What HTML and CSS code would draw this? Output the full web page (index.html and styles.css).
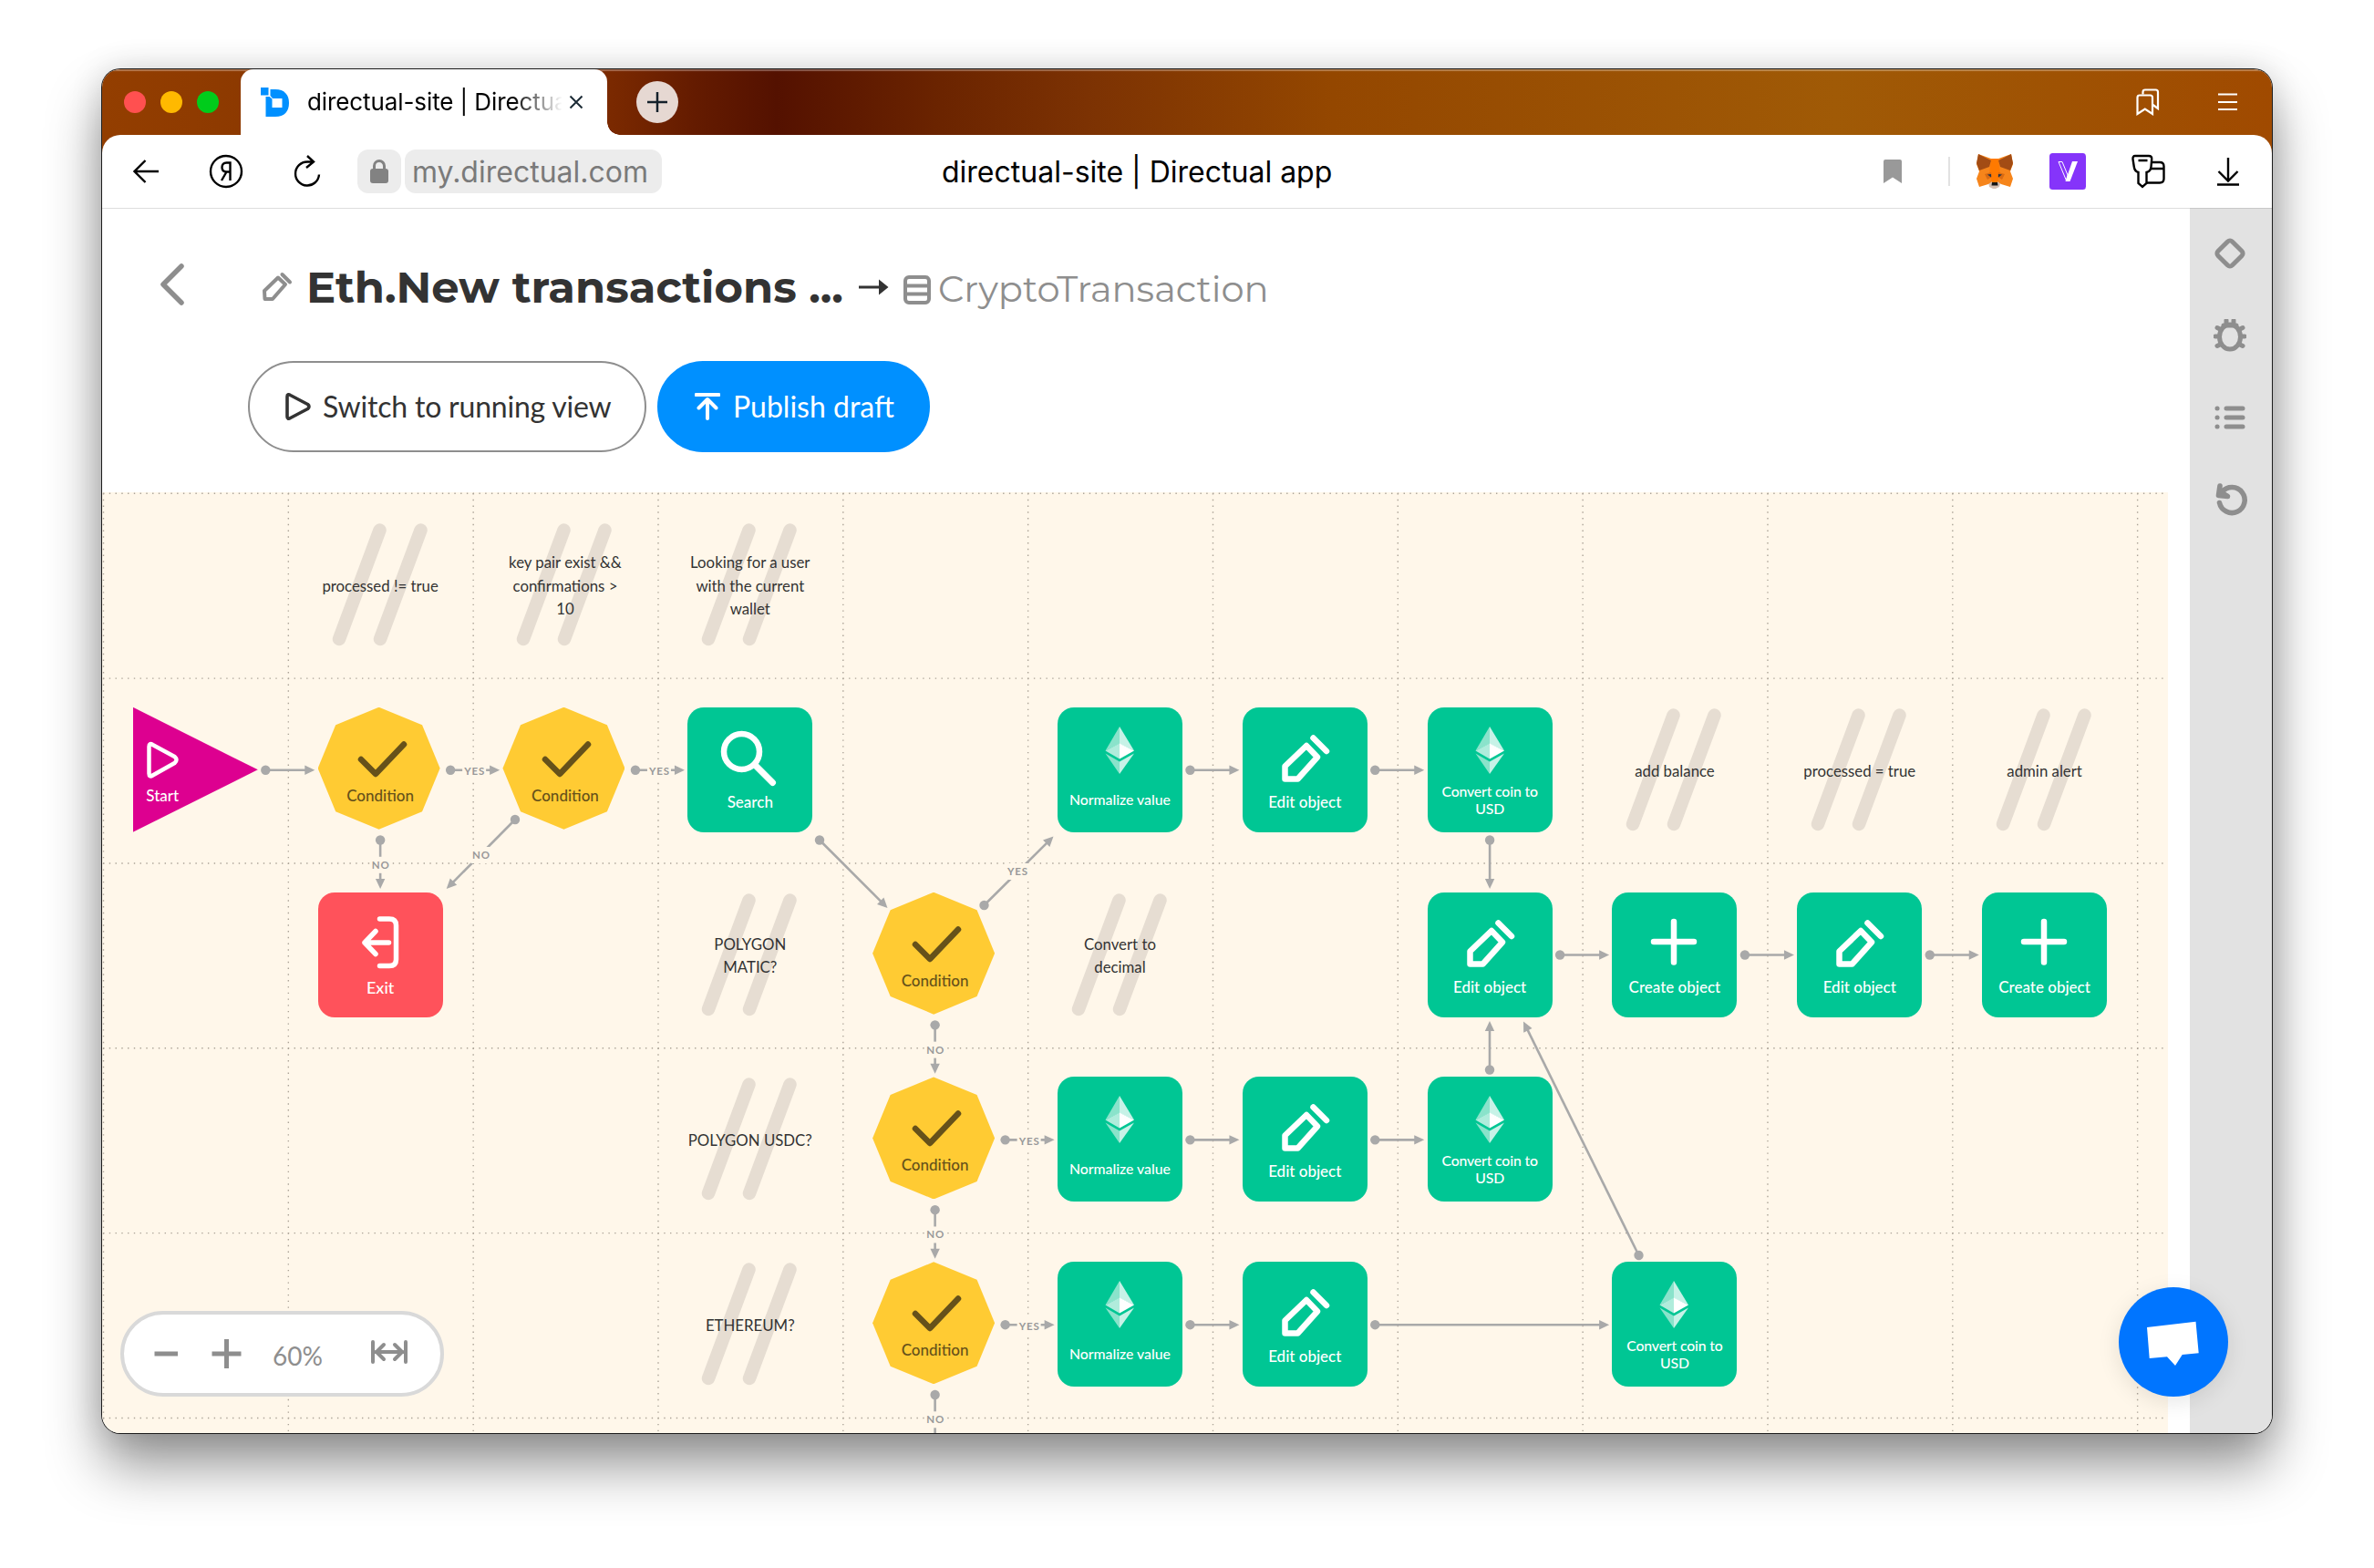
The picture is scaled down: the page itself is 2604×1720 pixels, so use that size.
FILE: index.html
```html
<!doctype html>
<html lang="en">

<head>
  <meta charset="UTF-8" />
  <meta name="viewport" content="width=device-width, initial-scale=1.0" />
  <title>directual-site | Directual app</title>
  <link rel="stylesheet" href="styles.css">
</head>

<body>
  <div class="window">
    <div class="tab-bar">
      <div class="lights">
        <span class="light red"></span>
        <span class="light yellow"></span>
        <span class="light green"></span>
      </div>
      <div class="tab">
        <svg class="favicon" width="32" height="32" viewBox="0 0 32 32">
          <path fill="#0090ff" d="M5.500 13V32H16C26 32 31 26 31 17C31 8 26 2 16 2H10.500V9L13 12H23.500V22H12.500V12.500L9.500 10H5.500Z" />
          <rect fill="#0090ff" x="0" y="0" width="8.500" height="8.500" />
        </svg>
        <span class="tab-title">directual-site | Directual app</span>
        <svg class="tab-close" width="16" height="16" viewBox="0 0 16 16">
          <path d="M1.500 1.500L14.500 14.500M14.500 1.500L1.500 14.500" />
        </svg>
      </div>
      <div class="new-tab">
        <svg width="46" height="46" viewBox="0 0 46 46">
          <path d="M12 23H34M23 12V34" />
        </svg>
      </div>
      <div class="bar-icons">
        <svg width="26" height="30" viewBox="0 0 26 30">
          <path d="M7.500 6.500V4Q7.500 1.500 10 1.500H21.500Q24 1.500 24 4V22L18.500 18" />
          <path d="M1.500 28V10Q1.500 7.500 4 7.500H15.500Q18 7.500 18 10V28L9.800 22.500Z" />
        </svg>
        <svg width="21" height="20" viewBox="0 0 21 20">
          <path d="M0 1.500H21M0 10H21M0 18H21" />
        </svg>
      </div>
    </div>

    <div class="toolbar">
      <div class="nav">
        <svg width="28" height="28" viewBox="0 0 28 28">
          <path d="M13.500 2L1.500 14L13.500 26M1.500 14H28" />
        </svg>
        <svg width="38" height="38" viewBox="0 0 38 38">
          <circle cx="19" cy="19" r="17" />
          <path d="M23.500 29V9.500H19.500Q14.500 9.500 14.500 14.500Q14.500 19.500 19.500 19.500H23.500M19.500 19.500L14 29" />
        </svg>
        <svg width="34" height="36" viewBox="0 0 34 36">
          <path d="M23 7.500H17A13 13 0 1 0 30 21.500M17 1L24 7.500L16 14" />
        </svg>
      </div>
      <div class="lock">
        <svg width="20" height="26" viewBox="0 0 20 26">
          <path d="M4.500 11V7A5.500 5.500 0 0 1 15.500 7V11" />
          <rect x="0" y="10" width="20" height="16" rx="3" />
        </svg>
      </div>
      <div class="url">my.directual.com</div>
      <div class="page-name">directual-site | Directual app</div>
      <div class="extensions">
        <svg class="bookmark" width="20" height="26" viewBox="0 0 20 26">
          <path fill="#999" d="M0 2Q0 0 2 0H18Q20 0 20 2V26L10 19.500L0 26Z" />
        </svg>
        <span class="divider"></span>
        <svg class="fox" width="40" height="38" viewBox="0 0 40 38">
          <path fill="#d5bfb2" d="M13 30H27L25 36L21 38H18L14 36Z" />
          <path fill="#f6851b" d="M2 0L16 5H24L38 0L40 11L37 19L40 27L37 36L27 33L23 30H17L13 33L3 36L0 27L3 19L0 11Z" />
          <path fill="#ff7a00" d="M16 5H24L26 21L23 31H17L14 21Z" />
          <path fill="#a34c14" d="M2 0L16 7L14 14L3 18L0 10ZM38 0L24 7L26 14L37 18L40 10Z" />
          <path fill="#d96a12" d="M9 22L16 20L17 25L12 28ZM31 22L24 20L23 25L28 28Z" />
          <path fill="#233447" d="M12 22.500L16 22L16 25.500ZM28 22.500L24 22L24 25.500Z" />
          <path fill="#161616" d="M17 31H23L23.500 34.500H16.500Z" />
        </svg>
        <svg class="vee" width="40" height="40" viewBox="0 0 40 40">
          <rect width="40" height="40" rx="3.500" fill="#8534fa" />
          <path fill="none" stroke="#fff" stroke-width="1" d="M10 9.500H14L20 24L18.500 30Z" />
          <path fill="#fff" d="M25 9H31L22.500 31H17.500Z" />
        </svg>
        <svg class="keys" width="37" height="38" viewBox="0 0 37 38">
          <path d="M21 9H31Q35.500 9 35.500 13.500V27Q35.500 31.500 31 31.500H16.500M21.500 16H35" />
          <path d="M4 2H19Q22.500 2 22.200 5.500L21.500 14Q21 19 16.500 20V32L12 36L7.500 32V20Q3.500 19 2.800 14L1.500 5.500Q1.200 2 4 2ZM7.500 7H17.500" />
        </svg>
        <svg class="download" width="24" height="31" viewBox="0 0 24 31">
          <path d="M12 0V25M1.500 15L12 25.500L22.500 15M0 29.500H24" />
        </svg>
      </div>
    </div>

    <div class="page">
      <div class="main">
        <div class="header">
          <svg class="back" width="28" height="48" viewBox="0 0 28 48">
            <path d="M24 4L4 24L24 44" />
          </svg>
          <div class="title">
            <svg class="edit" width="34" height="34" viewBox="0 0 34 34">
              <path d="M3 21L18 6.500L26 14L12 30H3.500Z" />
              <path d="M22.500 3L31 11.500" />
            </svg>
            <h1>Eth.New transactions ...</h1>
            <svg class="to" width="33" height="20" viewBox="0 0 33 20">
              <path fill="#333" d="M0 8.500H22V1.500L32.500 10L22 18.500V11.500H0Z" />
            </svg>
            <svg class="table" width="30" height="32" viewBox="0 0 30 32">
              <rect x="2" y="2" width="26" height="28" rx="4" />
              <path d="M2 11.500H28M2 20.500H28" />
            </svg>
            <span class="struct">CryptoTransaction</span>
          </div>
        </div>
        <div class="actions">
          <button class="btn">
            <svg width="28" height="30" viewBox="0 0 28 30">
              <path d="M2 4Q2 0.500 5.500 2.500L24.500 12.500Q27.500 15 24.500 17.500L5.500 27.500Q2 29.500 2 26Z" />
            </svg>
            <span class="btn-text">Switch to running view</span>
          </button>
          <button class="btn primary">
            <svg width="28" height="30" viewBox="0 0 28 30">
              <path d="M1.500 2H26.500M14 28V8M4.500 16.500L14 7L23.500 16.500" />
            </svg>
            <span class="btn-text">Publish draft</span>
          </button>
        </div>

        <div class="canvas" id="canvas">
          <svg class="links" id="links" width="2266" height="1032" viewBox="112 540 2266 1032"></svg>
        </div>
      </div>

      <div class="sidebar">
        <svg width="36" height="36" viewBox="0 0 36 36">
          <rect x="7" y="7" width="22" height="22" rx="3.500" transform="rotate(45 18 18)" />
        </svg>
        <svg width="36" height="36" viewBox="0 0 36 36">
          <ellipse cx="18" cy="19.500" rx="11.500" ry="13.500" />
          <path d="M14 6V1.500M22 6V1.500M11 7H25M7 11L4 9.500M29 11L32 9.500M6 19H2M30 19H34M7 28L4 29.500M29 28L32 29.500" />
        </svg>
        <svg width="36" height="36" viewBox="0 0 36 36">
          <path d="M4 8H4.100M4 18H4.100M4 28H4.100M14 8H32M14 18H32M14 28H32" />
        </svg>
        <svg class="undo" width="36" height="36" viewBox="0 0 36 36">
          <path d="M6.500 21.500A14 14 0 1 0 9.500 9.500M7 3L5.500 13.500L15.500 14.500L8 10" />
        </svg>
      </div>

      <div class="zoom">
        <svg width="96" height="32" viewBox="0 0 96 32">
          <path d="M0.500 16H26M63.500 16H95.500M79.500 0V32" />
        </svg>
        <span class="percent">60%</span>
        <svg class="fit" width="40" height="26" viewBox="0 0 40 26">
          <path d="M2 2V24M38 2V24M5 13H35M14 5L6 13L14 21M26 5L34 13L26 21" />
        </svg>
      </div>
      <div class="chat">
        <svg width="120" height="120" viewBox="0 0 120 120">
          <path fill="#fff" d="M31 44L84.500 37.700L87.700 72.300L69.700 74L62 86L53 76.300L33.700 78Z" />
        </svg>
      </div>
    </div>
  </div>

  <script>
    const CELL = 202.83;
    const ORIGIN_X = 145.8;
    const ORIGIN_Y = 775.8;

    const icons = {
      start: '<path d="M17.500 43Q17.500 38.500 21.500 41L45.500 54Q49.500 57.500 45.500 61L21.500 74.500Q17.500 77 17.500 72.500Z" stroke-width="4.500"/>',
      condition: '<path d="M47 57L63 73L94 40.500" stroke-width="6.500"/>',
      search: '<circle cx="59.500" cy="48.500" r="19.500" stroke-width="6.500"/><path d="M74.500 63.500L93.500 82.500" stroke-width="7"/>',
      exit: '<path d="M67.500 29H78Q85.500 29 85.500 36V73.500Q85.500 80.500 78 80.500H67.500M77.500 55H51M63 42.500L51 55L63 67.500" stroke-width="5.500"/>',
      edit: '<path d="M46.500 64.500L70 42L82 54.500L60.500 78.500H46.500Z" stroke-width="6.500"/><path d="M77.500 33.500L92 48" stroke-width="6.500"/>',
      create: '<path d="M68 32V76.500M46 54H90" stroke-width="6.500"/>',
      eth: '<g stroke="none"><path fill="#8ae3cb" d="M68 21V40L52.500 47.500Z"/><path fill="#c7f2e7" d="M68 21V40L84 47.500Z"/><path fill="#b0ecdc" d="M68 39.500V56.500L52.500 47.500Z"/><path fill="#fff" d="M68 39.500V56.500L84 47.500Z"/><path fill="#8ae3cb" d="M68 59.500V73L52.500 50.500Z"/><path fill="#c7f2e7" d="M68 59.500V73L84 50.500Z"/></g>',
      comment: '<path d="M67.500 8.500L23 128M112.500 8.500L68 128" stroke-width="14.500"/>'
    };

    // [column, row, type, label, icon]
    const nodes = [
      [1, -1, "comment", "processed != true"],
      [2, -1, "comment", "key pair exist &amp;&amp;<br>confirmations &gt;<br>10"],
      [3, -1, "comment", "Looking for a user<br>with the current<br>wallet"],
      [0, 0, "start", "Start"],
      [1, 0, "condition", "Condition"],
      [2, 0, "condition", "Condition"],
      [3, 0, "action", "Search", "search"],
      [5, 0, "plugin", "Normalize value", "eth"],
      [6, 0, "action", "Edit object", "edit"],
      [7, 0, "plugin two", "Convert coin to<br>USD", "eth"],
      [8, 0, "comment", "add balance"],
      [9, 0, "comment", "processed = true"],
      [10, 0, "comment", "admin alert"],
      [1, 1, "exit", "Exit"],
      [3, 1, "comment", "POLYGON<br>MATIC?"],
      [4, 1, "condition", "Condition"],
      [5, 1, "comment", "Convert to<br>decimal"],
      [7, 1, "action", "Edit object", "edit"],
      [8, 1, "action", "Create object", "create"],
      [9, 1, "action", "Edit object", "edit"],
      [10, 1, "action", "Create object", "create"],
      [3, 2, "comment", "POLYGON USDC?"],
      [4, 2, "condition", "Condition"],
      [5, 2, "plugin", "Normalize value", "eth"],
      [6, 2, "action", "Edit object", "edit"],
      [7, 2, "plugin two", "Convert coin to<br>USD", "eth"],
      [3, 3, "comment", "ETHEREUM?"],
      [4, 3, "condition", "Condition"],
      [5, 3, "plugin", "Normalize value", "eth"],
      [6, 3, "action", "Edit object", "edit"],
      [8, 3, "plugin two", "Convert coin to<br>USD", "eth"]
    ];

    const canvas = document.getElementById("canvas");
    nodes.forEach(([col, row, type, label, icon]) => {
      const node = document.createElement("div");
      node.className = `node ${type}`;
      node.style.left = `${ORIGIN_X + col * CELL - 112}px`;
      node.style.top = `${ORIGIN_Y + row * CELL - 540}px`;
      node.innerHTML = `<svg class="icon" viewBox="0 0 137 137">${icons[icon || type]}</svg><span class="label">${label}</span>`;
      canvas.appendChild(node);
    });

    let out = "";

    // dotted grid
    for (let i = 0; i < 12; i++) {
      const x = 113.5 + i * CELL;
      out += `<path class="grid" d="M${x} 541V1572"/>`;
    }
    for (let i = 0; i < 6; i++) {
      const y = 541.3 + i * CELL;
      out += `<path class="grid" d="M113 ${y}H2376"/>`;
    }

    function link(x1, y1, x2, y2, text, tx, ty) {
      const angle = Math.atan2(y2 - y1, x2 - x1) * 180 / Math.PI;
      const len = Math.hypot(x2 - x1, y2 - y1);
      out += `<g transform="translate(${x1} ${y1}) rotate(${angle})">
        <path class="line" d="M0 0H${len - 8}"/><circle class="end" r="5.200"/>
        <path class="end" d="M${len} 0L${len - 11} -5.200V5.200Z"/></g>`;
      if (text) {
        const w = text === "YES" ? 26 : 22;
        out += `<rect class="mask" x="${tx - w / 2}" y="${ty - 9}" width="${w}" height="18"/>
          <text class="tag" x="${tx + 0.5}" y="${ty + 4}">${text}</text>`;
      }
    }

    function right(col, row, text, span = 1) {
      const x = ORIGIN_X + col * CELL + 145.5;
      const y = ORIGIN_Y + row * CELL + 68.9;
      link(x, y, x + 54 + (span - 1) * CELL, y, text, x + 26, y + 1.5);
    }

    function down(col, row, text) {
      const x = ORIGIN_X + col * CELL + 68.5;
      const y = ORIGIN_Y + row * CELL + 145.7;
      link(x, y, x, y + 53.5, text, x, y + 27.3);
    }

    right(0, 0);
    right(1, 0, "YES");
    right(2, 0, "YES");
    right(5, 0);
    right(6, 0);
    right(7, 1);
    right(8, 1);
    right(9, 1);
    right(4, 2, "YES");
    right(5, 2);
    right(6, 2);
    right(4, 3, "YES");
    right(5, 3);
    right(6, 3, "", 2);
    down(1, 0, "NO");
    down(4, 1, "NO");
    down(4, 2, "NO");
    down(4, 3, "NO");
    down(7, 0);
    link(1634, 1173.5, 1634, 1120);
    link(565, 899, 489.7, 975, "NO", 527.5, 938);
    link(899, 921.5, 973.5, 996);
    link(1079.5, 993, 1155.5, 917.5, "YES", 1116, 956);
    link(1797.5, 1377, 1671, 1120.5);
    document.getElementById("links").innerHTML = out;
  </script>
</body>

</html>
```
FILE: styles.css
```css
* {
  box-sizing: border-box;
}

body {
  margin: 0;
  padding: 76px 112px 148px;
  height: 1720px;
  background: #fff;
  font-family: Lato, "Liberation Sans", sans-serif;
  color: #333;
  overflow: hidden;
}

svg {
  display: block;
  flex: none;
}

.window {
  width: 2380px;
  height: 1496px;
  display: flex;
  flex-direction: column;
  border-radius: 20px;
  overflow: hidden;
  background: #fff;
  box-shadow: 0 0 0 1px #1b1b1b, 0 36px 60px rgba(0, 0, 0, 0.42), 0 0 36px rgba(0, 0, 0, 0.14);
}

/* browser chrome */

.tab-bar {
  height: 92px;
  margin-bottom: -20px;
  padding-bottom: 20px;
  flex: none;
  display: flex;
  align-items: center;
  background: linear-gradient(90deg, #933e00 0, #873500 300px, #7a2900 560px, #641b00 650px, #541100 740px, #6b2400 920px, #7c3203 1080px, #944700 1350px, #a05a06 1900px, #9f5203 2150px, #a04a00 2380px);
  box-shadow: inset 0 2px 1px rgba(255, 255, 255, 0.3);
}

.lights {
  width: 152px;
  padding-left: 24px;
  display: flex;
  gap: 16px;
}

.light {
  width: 24px;
  height: 24px;
  border-radius: 50%;
}

.red {
  background: #ff5050;
}

.yellow {
  background: #ffb900;
}

.green {
  background: #00cc1b;
}

.tab {
  position: relative;
  width: 402px;
  height: 72px;
  padding: 0 26px 0 22px;
  display: flex;
  align-items: center;
  background: #fff;
  border-radius: 14px 14px 0 0;
}

/* concave corner where the tab meets the toolbar */
.tab::after {
  content: "";
  position: absolute;
  left: 100%;
  bottom: 0;
  width: 14px;
  height: 14px;
  background: radial-gradient(circle at 100% 0, transparent 13.5px, #fff 14px);
}

.favicon {
  margin-right: 19px;
}

.tab-title {
  width: 280px;
  overflow: hidden;
  white-space: nowrap;
  font: 26px/36px Inter, "Liberation Sans", sans-serif;
  letter-spacing: -0.1px;
  color: #000;
  mask-image: linear-gradient(90deg, #000 225px, transparent 280px);
}

.tab-close {
  margin-left: 8px;
  fill: none;
  stroke: #1c2b36;
  stroke-width: 2;
}

.new-tab {
  margin-left: 32px;
  border-radius: 50%;
  background: #e6d8d2;
}

.new-tab svg {
  fill: none;
  stroke: #14212b;
  stroke-width: 2.5;
}

.bar-icons {
  margin-left: auto;
  padding-right: 38px;
  display: flex;
  align-items: center;
  gap: 64px;
}

.bar-icons svg {
  fill: none;
  stroke: #fff;
  stroke-width: 2.2;
}

.toolbar {
  height: 80px;
  flex: none;
  display: flex;
  align-items: center;
  background: #fff;
  border-radius: 20px 20px 0 0;
}

.nav {
  width: 280px;
  padding-left: 34px;
  display: flex;
  align-items: center;
  gap: 54px;
}

.nav svg {
  fill: none;
  stroke: #000;
  stroke-width: 2.4;
}

.nav svg + svg {
  margin-left: 1px;
}

.nav svg:last-child {
  margin-left: -1px;
}

.lock {
  width: 48px;
  height: 48px;
  display: flex;
  align-items: center;
  justify-content: center;
  background: #ececec;
  border-radius: 12px;
}

.lock path {
  fill: none;
  stroke: #828282;
  stroke-width: 3;
}

.lock rect {
  fill: #828282;
}

.url {
  width: 282px;
  height: 48px;
  margin-left: 4px;
  padding: 1px 0 0 8px;
  background: #ececec;
  border-radius: 12px;
  font: 32px/48px Inter, "Liberation Sans", sans-serif;
  color: #7a7a7a;
  white-space: nowrap;
}

.page-name {
  margin-left: 307px;
  padding-top: 2px;
  font: 32px/48px Inter, "Liberation Sans", sans-serif;
  color: #000;
  white-space: nowrap;
}

.extensions {
  margin-left: auto;
  padding-right: 36px;
  display: flex;
  align-items: center;
}

.divider {
  width: 2px;
  height: 32px;
  margin: 0 29px 0 51px;
  background: #e2e2e2;
}

.vee {
  margin: 0 50px 0 40px;
}

.keys,
.download {
  fill: none;
  stroke: #000;
  stroke-width: 2.4;
}

.keys {
  margin-right: 57px;
}

/* page */

.page {
  position: relative;
  flex: 1;
  min-height: 0;
  display: flex;
}

.main {
  width: 2290px;
}

.header {
  height: 167px;
  padding: 59px 0 0 63px;
  display: flex;
  border-top: 1px solid #dedede;
}

.back {
  fill: none;
  stroke: #8e8e8e;
  stroke-width: 5.5;
  stroke-linecap: round;
  stroke-linejoin: round;
}

.title {
  height: 60px;
  margin-left: 84px;
  display: flex;
  align-items: center;
  white-space: nowrap;
}

.edit,
.table {
  fill: none;
  stroke: #8e8e8e;
  stroke-width: 4;
  stroke-linecap: round;
  stroke-linejoin: round;
}

.edit {
  margin-bottom: 6px;
}

h1 {
  width: 606px;
  margin: 0 0 0 15px;
  padding-bottom: 6px;
  font: 700 48px/60px Montserrat, Inter, sans-serif;
}

.to {
  margin-bottom: 7px;
}

.table {
  margin: 0 8px 1px 16px;
}

.struct {
  padding-bottom: 2px;
  font: 40px/60px Montserrat, Inter, sans-serif;
  color: #8e8e8e;
}

.actions {
  height: 145px;
  padding: 1px 0 0 160px;
  display: flex;
  align-items: flex-start;
  gap: 12px;
}

.btn {
  width: 437px;
  height: 100px;
  padding: 0 0 0 39px;
  display: flex;
  align-items: center;
  gap: 13px;
  border: 2px solid #8e8e8e;
  border-radius: 50px;
  background: #fff;
  font: 32px/40px Lato, sans-serif;
  letter-spacing: -0.2px;
  color: #333;
  white-space: nowrap;
}

.btn svg {
  fill: none;
  stroke: currentColor;
  stroke-width: 3.6;
  stroke-linecap: round;
  stroke-linejoin: round;
}

.primary {
  width: 299px;
  gap: 14px;
  border-color: #0090ff;
  background: #0090ff;
  letter-spacing: 0;
  color: #fff;
}

.primary svg {
  stroke-width: 4;
}

.canvas {
  position: relative;
  width: 2266px;
  height: 1032px;
  background: #fff7ea;
}

.links,
.node,
.icon,
.label {
  position: absolute;
}

.links {
  left: 0;
  top: 0;
}

.grid {
  stroke: #aca498;
  stroke-width: 1.4;
  stroke-dasharray: 1.4 5.361;
}

.line {
  stroke: #a9a9a9;
  stroke-width: 2.6;
}

.end {
  fill: #a9a9a9;
}

.mask {
  fill: #fff7ea;
}

.tag {
  font: 700 11.5px Lato, sans-serif;
  letter-spacing: 0.8px;
  fill: #999;
  text-anchor: middle;
}

.node {
  width: 137px;
  height: 137px;
}

.icon {
  left: 0;
  top: 0;
  width: 137px;
  height: 137px;
  fill: none;
  stroke: #fff;
  stroke-linecap: round;
  stroke-linejoin: round;
}

.label {
  left: 0;
  width: 100%;
  top: 93px;
  text-align: center;
  font-size: 17px;
  line-height: 22px;
  font-weight: 500;
  color: #fff;
  white-space: nowrap;
}

.action,
.plugin {
  background: #00c694;
  border-radius: 18px;
}

.plugin .label {
  top: 90px;
  font-size: 15.8px;
}

.two .label {
  top: 83px;
  line-height: 18.8px;
  letter-spacing: -0.15px;
}

.exit {
  background: #ff525b;
  border-radius: 18px;
}

.exit .label {
  font-size: 18px;
}

.start {
  background: #dd0090;
  clip-path: polygon(0 0, 100% 50%, 0 100%);
}

.start .label {
  top: 86px;
  width: 65px;
}

.condition::before {
  content: "";
  position: absolute;
  left: 0;
  top: 0;
  width: 134px;
  height: 134px;
  background: #ffcb33;
  clip-path: polygon(50% 0, 85.4% 14.6%, 100% 50%, 85.4% 85.4%, 50% 100%, 14.6% 85.4%, 0 50%, 14.6% 14.6%);
}

.condition .icon {
  stroke: #66511a;
}

.condition .label {
  top: 86px;
  color: #66511a;
}

.comment {
  display: flex;
  align-items: center;
  justify-content: center;
}

.comment .icon {
  stroke: #e6ddd2;
}

.comment .label {
  position: relative;
  top: 1px;
  font-size: 16.8px;
  line-height: 25.6px;
  font-weight: 400;
  color: #333;
}

.sidebar {
  width: 90px;
  padding: 31px 2px 0 0;
  display: flex;
  flex-direction: column;
  align-items: center;
  gap: 54px;
  background: #e2e2e2;
  border-top: 1px solid #c8c8c8;
}

.sidebar svg {
  fill: none;
  stroke: #8e8e8e;
  stroke-width: 5;
  stroke-linecap: round;
  stroke-linejoin: round;
}

.sidebar .undo {
  stroke-width: 5.6;
  overflow: visible;
}

.zoom {
  position: absolute;
  left: 20px;
  bottom: 40px;
  width: 355px;
  height: 94px;
  padding-left: 33px;
  display: flex;
  align-items: center;
  border: 4px solid #d9d9d9;
  border-radius: 47px;
  background: #fff;
}

.zoom svg {
  fill: none;
  stroke: #8e8e8e;
  stroke-width: 5;
}

.percent {
  width: 108px;
  margin-left: 34px;
  padding-top: 3px;
  font-size: 28px;
  color: #8e8e8e;
}

.zoom .fit {
  margin-top: -4px;
  stroke-width: 4;
  stroke-linecap: round;
  stroke-linejoin: round;
}

.chat {
  position: absolute;
  right: 48px;
  bottom: 40px;
  width: 120px;
  height: 120px;
  border-radius: 50%;
  background: #0075ff;
  box-shadow: 0 6px 24px rgba(0, 0, 0, 0.1);
}
```
